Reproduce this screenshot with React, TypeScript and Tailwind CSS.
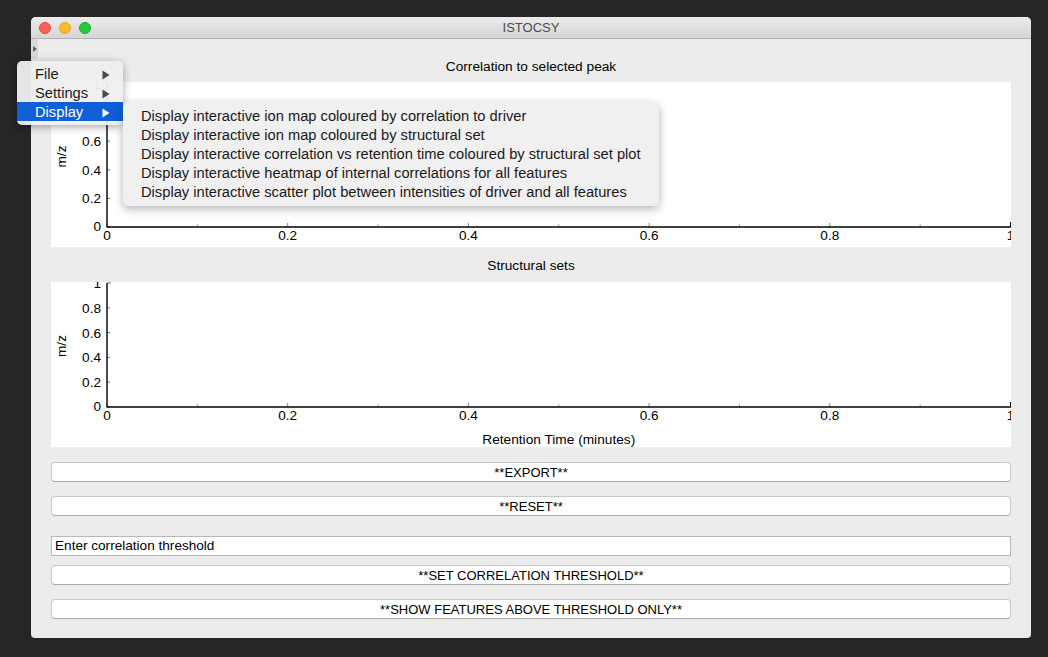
import React from "react";

const X0 = 56;
const X1 = 959.5;
const FONT = "Liberation Sans, Arial, sans-serif";

function Plot({ yTop, yZero, xLabel }: { yTop: number; yZero: number; xLabel?: boolean }) {
  const labels = ["0", "0.2", "0.4", "0.6", "0.8", "1"];
  const xs = labels.map((_, i) => X0 + (i * (X1 - X0)) / 5);
  const minor = [0.1, 0.3, 0.5, 0.7, 0.9].map((v) => X0 + v * (X1 - X0));
  const ys = labels.map((_, i) => yZero - (i * (yZero - yTop)) / 5);
  const mid = (yTop + yZero) / 2;
  return (
    <div className="h-[165px] w-full bg-white overflow-hidden">
      <svg width="960" height="165" viewBox="0 0 960 165" className="block">
        {ys.map((y, i) => (
          <line key={"yt" + i} x1={X0} x2={X0 + (i === 5 ? 4 : 3)} y1={y} y2={y} stroke="#777" strokeWidth="1" />
        ))}
        {xs.map((x, i) => (
          <line key={"xt" + i} x1={x} x2={x} y1={yZero} y2={yZero - (i === 5 ? 5 : 4)} stroke={i === 5 ? "#000" : "#888"} strokeWidth="1" />
        ))}
        {minor.map((x, i) => (
          <line key={"xm" + i} x1={x} x2={x} y1={yZero} y2={yZero - 3} stroke="#aaa" strokeWidth="1" />
        ))}
        <line x1={X0} x2={X0} y1={yTop} y2={yZero + 0.6} stroke="#000" strokeWidth="1.4" />
        <line x1={X0} x2={X1 + 0.5} y1={yZero} y2={yZero} stroke="#000" strokeWidth="1.4" />
        {ys.map((y, i) => (
          <text
            key={"yl" + i}
            x={50}
            y={(i === 0 ? y - 1 : y) + 5}
            textAnchor="end"
            fontSize="13.6"
            fontFamily={FONT}
            fill="#000"
          >
            {labels[i]}
          </text>
        ))}
        {xs.map((x, i) => (
          <text
            key={"xl" + i}
            x={x}
            y={yZero + 13}
            textAnchor="middle"
            fontSize="13.6"
            fontFamily={FONT}
            fill="#000"
          >
            {labels[i]}
          </text>
        ))}
        <text
          x={10}
          y={mid + 1}
          transform={`rotate(-90 10 ${mid + 1})`}
          textAnchor="middle"
          dominantBaseline="central"
          fontSize="13.6"
          fontFamily={FONT}
          fill="#000"
        >
          m/z
        </text>
        {xLabel && (
          <text
            x={(X0 + X1) / 2}
            y={161.5}
            textAnchor="middle"
            fontSize="13.7"
            fontFamily={FONT}
            fill="#000"
          >
            Retention Time (minutes)
          </text>
        )}
      </svg>
    </div>
  );
}

function Button({ label, className }: { label: string; className?: string }) {
  return (
    <div
      className={
        "h-[20px] w-full rounded-[4px] bg-white border border-[#c8c8c8] border-b-[#a9a9a9] flex items-center justify-center text-[13px] leading-none text-black " +
        (className ?? "")
      }
    >
      {label}
    </div>
  );
}

function Arrow({ color }: { color: string }) {
  return (
    <svg width="8" height="10" viewBox="0 0 8 10" className="block">
      <polygon points="0.5,0.5 7.5,5 0.5,9.5" fill={color} />
    </svg>
  );
}

export default function App() {
  const subItems = [
    "Display interactive ion map coloured by correlation to driver",
    "Display interactive ion map coloured by structural set",
    "Display interactive correlation vs retention time coloured by structural set plot",
    "Display interactive heatmap of internal correlations for all features",
    "Display interactive scatter plot between intensities of driver and all features",
  ];
  return (
    <div className="relative w-[1048px] h-[657px] overflow-hidden bg-[#262626] pl-[31px] pt-[17px] font-['Liberation_Sans',Arial,sans-serif]">
      <div className="w-[1000px] h-[621px] rounded-t-[5px] rounded-b-[4px] overflow-hidden bg-[#ececec] flex flex-col">
        <div className="relative h-[22px] shrink-0 bg-gradient-to-b from-[#ebebeb] to-[#d5d5d5] border-b border-[#b1b1b1] flex items-center justify-center">
          <div className="absolute left-[8px] top-[5px] flex gap-[8px]">
            <div className="w-[12px] h-[12px] rounded-full bg-[#fc5f57] border border-[#e0443e]" />
            <div className="w-[12px] h-[12px] rounded-full bg-[#fdbc2e] border border-[#dea123]" />
            <div className="w-[12px] h-[12px] rounded-full bg-[#28c83f] border border-[#1aab29]" />
          </div>
          <span className="text-[13px] text-[#4d4d4d] leading-none">ISTOCSY</span>
        </div>
        <div className="relative flex-1 flex flex-col px-[20px]">
          <div className="absolute left-0 top-0 w-[7px] h-[20px] bg-[#dadada] flex items-center justify-center">
            <svg width="4" height="6" viewBox="0 0 4 6" className="block">
              <polygon points="0,0 4,3 0,6" fill="#666" />
            </svg>
          </div>
          <div className="mt-[20px] h-[16px] flex items-center justify-center text-[13.7px] text-black">
            Correlation to selected peak
          </div>
          <div className="mt-[7px]">
            <Plot yTop={2} yZero={145} />
          </div>
          <div className="mt-[11px] h-[16px] flex items-center justify-center text-[13.7px] text-black">
            Structural sets
          </div>
          <div className="mt-[8px]">
            <Plot yTop={1} yZero={125} xLabel />
          </div>
          <Button label="**EXPORT**" className="mt-[15px]" />
          <Button label="**RESET**" className="mt-[14px]" />
          <div className="mt-[20px] h-[20px] w-full bg-white border border-[#b8b8b8] flex items-center pl-[3px] text-[13.6px] text-black">
            Enter correlation threshold
          </div>
          <Button label="**SET CORRELATION THRESHOLD**" className="mt-[9px]" />
          <Button label="**SHOW FEATURES ABOVE THRESHOLD ONLY**" className="mt-[14px]" />
        </div>
      </div>

      <div className="absolute left-[17px] top-[61px] w-[106px] rounded-[5px] bg-[#efefef]/95 shadow-[0_2px_8px_rgba(0,0,0,0.35)] pt-[3px] pb-[4px] text-[14.7px]">
        <div className="h-[19px] flex items-center justify-between pl-[18px] pr-[13px] pt-[2px] text-[#1a1a1a]">
          <span>File</span>
          <Arrow color="#4a4a4a" />
        </div>
        <div className="h-[19px] flex items-center justify-between pl-[18px] pr-[13px] pt-[2px] text-[#1a1a1a]">
          <span>Settings</span>
          <Arrow color="#4a4a4a" />
        </div>
        <div className="h-[19px] flex items-center justify-between pl-[18px] pr-[13px] pt-[2px] bg-[#0f5fd8] text-white">
          <span>Display</span>
          <Arrow color="#ffffff" />
        </div>
      </div>

      <div className="absolute left-[123px] top-[102px] w-[536px] rounded-[5px] bg-[#f0f0f0] shadow-[0_3px_10px_rgba(0,0,0,0.3)] pt-[4px] pb-[5px] text-[14.7px] text-[#1a1a1a]">
        {subItems.map((s) => (
          <div key={s} className="h-[19px] flex items-center pl-[18px] pt-[2px] whitespace-nowrap">
            {s}
          </div>
        ))}
      </div>
    </div>
  );
}
